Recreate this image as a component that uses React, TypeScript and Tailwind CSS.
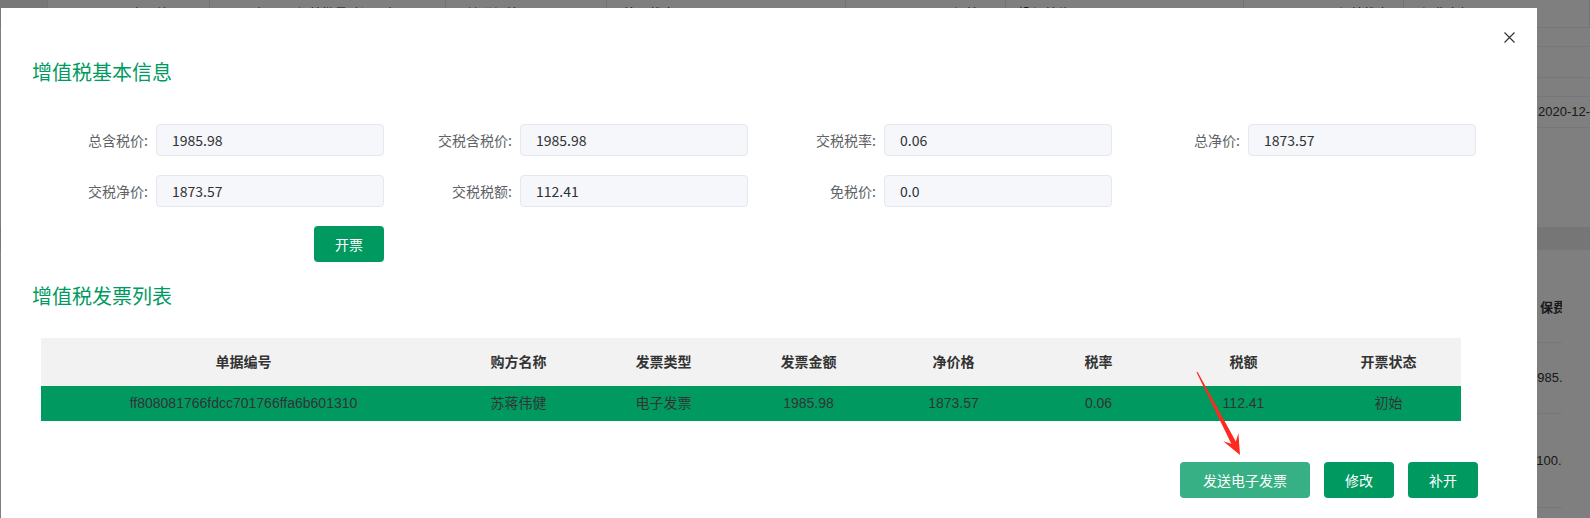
import React from "react";

const CN = "font-['Noto_Sans_CJK_SC',sans-serif]";
const TB = "font-['Liberation_Sans','Noto_Sans_CJK_SC',sans-serif]";

function BackgroundPage() {
  const topCells: { w: string; text: string; align: string; extra?: React.ReactNode; bg?: string }[] = [
    { w: "w-[48px]", text: "", align: "justify-center", bg: "bg-[#f0f0f0]" },
    { w: "w-[162px]", text: "合同编号：", align: "justify-end pr-[14px]" },
    { w: "w-[236px]", text: "2020年01月保单批量验证明细", align: "justify-start pl-[16px]" },
    { w: "w-[161px]", text: "关联保单号", align: "justify-start pl-[4px]", extra: <span className="mr-[4px] inline-block h-[12px] w-[12px] rounded-[2px] bg-[#0a6b43]" /> },
    { w: "w-[239px]", text: "处理状态", align: "justify-start pl-[16px]" },
    { w: "w-[160px]", text: "保单号", align: "justify-end pr-[14px]" },
    { w: "w-[238px]", text: "投保单位", align: "justify-start pl-[12px]" },
    { w: "w-[160px]", text: "保单状态", align: "justify-end pr-[14px]" },
    { w: "w-[186px]", text: "保费金额", align: "justify-start pl-[16px]" },
  ];
  return (
    <div className={`absolute inset-0 flex flex-col overflow-hidden whitespace-nowrap bg-white text-[#333] ${TB}`}>
      <div className="flex h-[28px] shrink-0 border-b border-[#ebeef5] text-[13px] leading-[28px]">
        {topCells.map((c, i) => (
          <div key={i} className={`flex shrink-0 items-center overflow-hidden ${c.w} ${c.align} ${c.bg ?? ""} border-r border-[#e6e6e6]`}>
            {c.extra}
            {c.text}
          </div>
        ))}
      </div>
      <div className="flex h-[19px] shrink-0 border-b border-[#ebeef5]" />
      <div className="flex h-[31px] shrink-0 border-b border-[#ebeef5]" />
      <div className="flex h-[19px] shrink-0 border-b border-[#ebeef5]" />
      <div className="flex h-[31px] shrink-0 items-center border-b border-[#ebeef5] text-[13px]">
        <span className="w-[1538px] shrink-0" />
        <span className="shrink-0">2020-12-01</span>
      </div>
      <div className="h-[99px] shrink-0" />
      <div className="h-[23px] shrink-0 bg-[#ececec]" />
      <div className="h-[23px] shrink-0" />
      <div className="flex h-[70px] shrink-0 items-center border-b border-[#ebeef5] text-[13px] font-bold">
        <span className="w-[1540px] shrink-0" />
        <span className="shrink-0">保费金额</span>
      </div>
      <div className="flex h-[71px] shrink-0 items-center border-b border-[#ebeef5] text-[13px]">
        <span className="w-[1530px] shrink-0" />
        <span className="shrink-0">1985.98</span>
      </div>
      <div className="flex h-[94px] shrink-0 items-center border-b border-[#ebeef5] text-[13px]">
        <span className="w-[1530px] shrink-0" />
        <span className="shrink-0">1100.00</span>
      </div>
      <div className="absolute bottom-0 left-[1562px] right-0 top-[262px] bg-white" />
    </div>
  );
}

function Field({ label, value }: { label: string; value: string }) {
  return (
    <div className="flex items-center">
      <div className={`w-[127px] text-right text-[14px] leading-[20px] text-[#606266] ${CN}`}>{label}</div>
      <div className={`ml-[8px] flex h-[32px] w-[228px] items-center rounded-[4px] border border-[#e4e7ed] bg-[#f5f7fa] pl-[15px] text-[14px] text-[#303133] ${CN}`}>
        {value}
      </div>
    </div>
  );
}

const headers = ["单据编号", "购方名称", "发票类型", "发票金额", "净价格", "税率", "税额", "开票状态"];
const row = ["ff808081766fdcc701766ffa6b601310", "苏蒋伟健", "电子发票", "1985.98", "1873.57", "0.06", "112.41", "初始"];

function Modal() {
  return (
    <div className="absolute left-[1px] top-[8px] flex h-[530px] w-[1536px] flex-col bg-white">
      <button className="absolute right-[22px] top-[24px] flex h-[11px] w-[11px] items-center justify-center">
        <svg width="11" height="11" viewBox="0 0 11 11" fill="none" stroke="#303133" strokeWidth="1.1">
          <path d="M0.5 0.5 L10.5 10.5 M10.5 0.5 L0.5 10.5" />
        </svg>
      </button>

      <h2 className={`ml-[31px] mt-[50px] text-[20px] font-normal leading-[28px] text-[#009a61] ${CN}`}>增值税基本信息</h2>

      <div className="ml-[20px] mt-[38px] grid grid-cols-[repeat(4,364px)] gap-y-[19px]">
        <Field label="总含税价:" value="1985.98" />
        <Field label="交税含税价:" value="1985.98" />
        <Field label="交税税率:" value="0.06" />
        <Field label="总净价:" value="1873.57" />
        <Field label="交税净价:" value="1873.57" />
        <Field label="交税税额:" value="112.41" />
        <Field label="免税价:" value="0.0" />
        <div />
        <div className="flex w-[363px] justify-end">
          <button className={`h-[36px] w-[70px] rounded-[4px] bg-[#009a61] text-[14px] text-white ${CN}`}>开票</button>
        </div>
      </div>

      <h2 className={`ml-[31px] mt-[20px] text-[20px] font-normal leading-[28px] text-[#009a61] ${CN}`}>增值税发票列表</h2>

      <table className={`ml-[40px] mt-[28px] w-[1420px] table-fixed border-collapse ${TB}`}>
        <colgroup>
          <col className="w-[405px]" />
          <col className="w-[145px]" />
          <col className="w-[145px]" />
          <col className="w-[145px]" />
          <col className="w-[145px]" />
          <col className="w-[145px]" />
          <col className="w-[145px]" />
          <col className="w-[145px]" />
        </colgroup>
        <thead>
          <tr className="h-[48px] bg-[#f2f2f2]">
            {headers.map((h) => (
              <th key={h} className="p-0 text-center text-[14px] font-bold text-[#333]">
                {h}
              </th>
            ))}
          </tr>
        </thead>
        <tbody>
          <tr className="h-[35px] bg-[#009a61]">
            {row.map((c, i) => (
              <td key={i} className="p-0 text-center text-[14px] text-[#333]">
                {c}
              </td>
            ))}
          </tr>
        </tbody>
      </table>

      <div className="mr-[59px] mt-[41px] flex justify-end gap-[14px]">
        <button className={`h-[36px] w-[130px] rounded-[4px] bg-[#36b084] text-[14px] text-white ${CN}`}>发送电子发票</button>
        <button className={`h-[36px] w-[70px] rounded-[4px] bg-[#009a61] text-[14px] text-white ${CN}`}>修改</button>
        <button className={`h-[36px] w-[70px] rounded-[4px] bg-[#009a61] text-[14px] text-white ${CN}`}>补开</button>
      </div>
    </div>
  );
}

function Arrow() {
  return (
    <svg className="pointer-events-none absolute left-0 top-0" width="1590" height="518" viewBox="0 0 1590 518">
      <polygon
        fill="#ff2a1f"
        points="1196.5,372.3 1231.3,443.7 1223.3,441.2 1240,455 1238.4,433.3 1235.8,441.4 1197.5,371.7"
      />
    </svg>
  );
}

export default function App() {
  return (
    <div className="relative h-[518px] w-[1590px] overflow-hidden bg-white">
      <BackgroundPage />
      <div className="absolute inset-0 bg-black/50" />
      <Modal />
      <Arrow />
    </div>
  );
}
